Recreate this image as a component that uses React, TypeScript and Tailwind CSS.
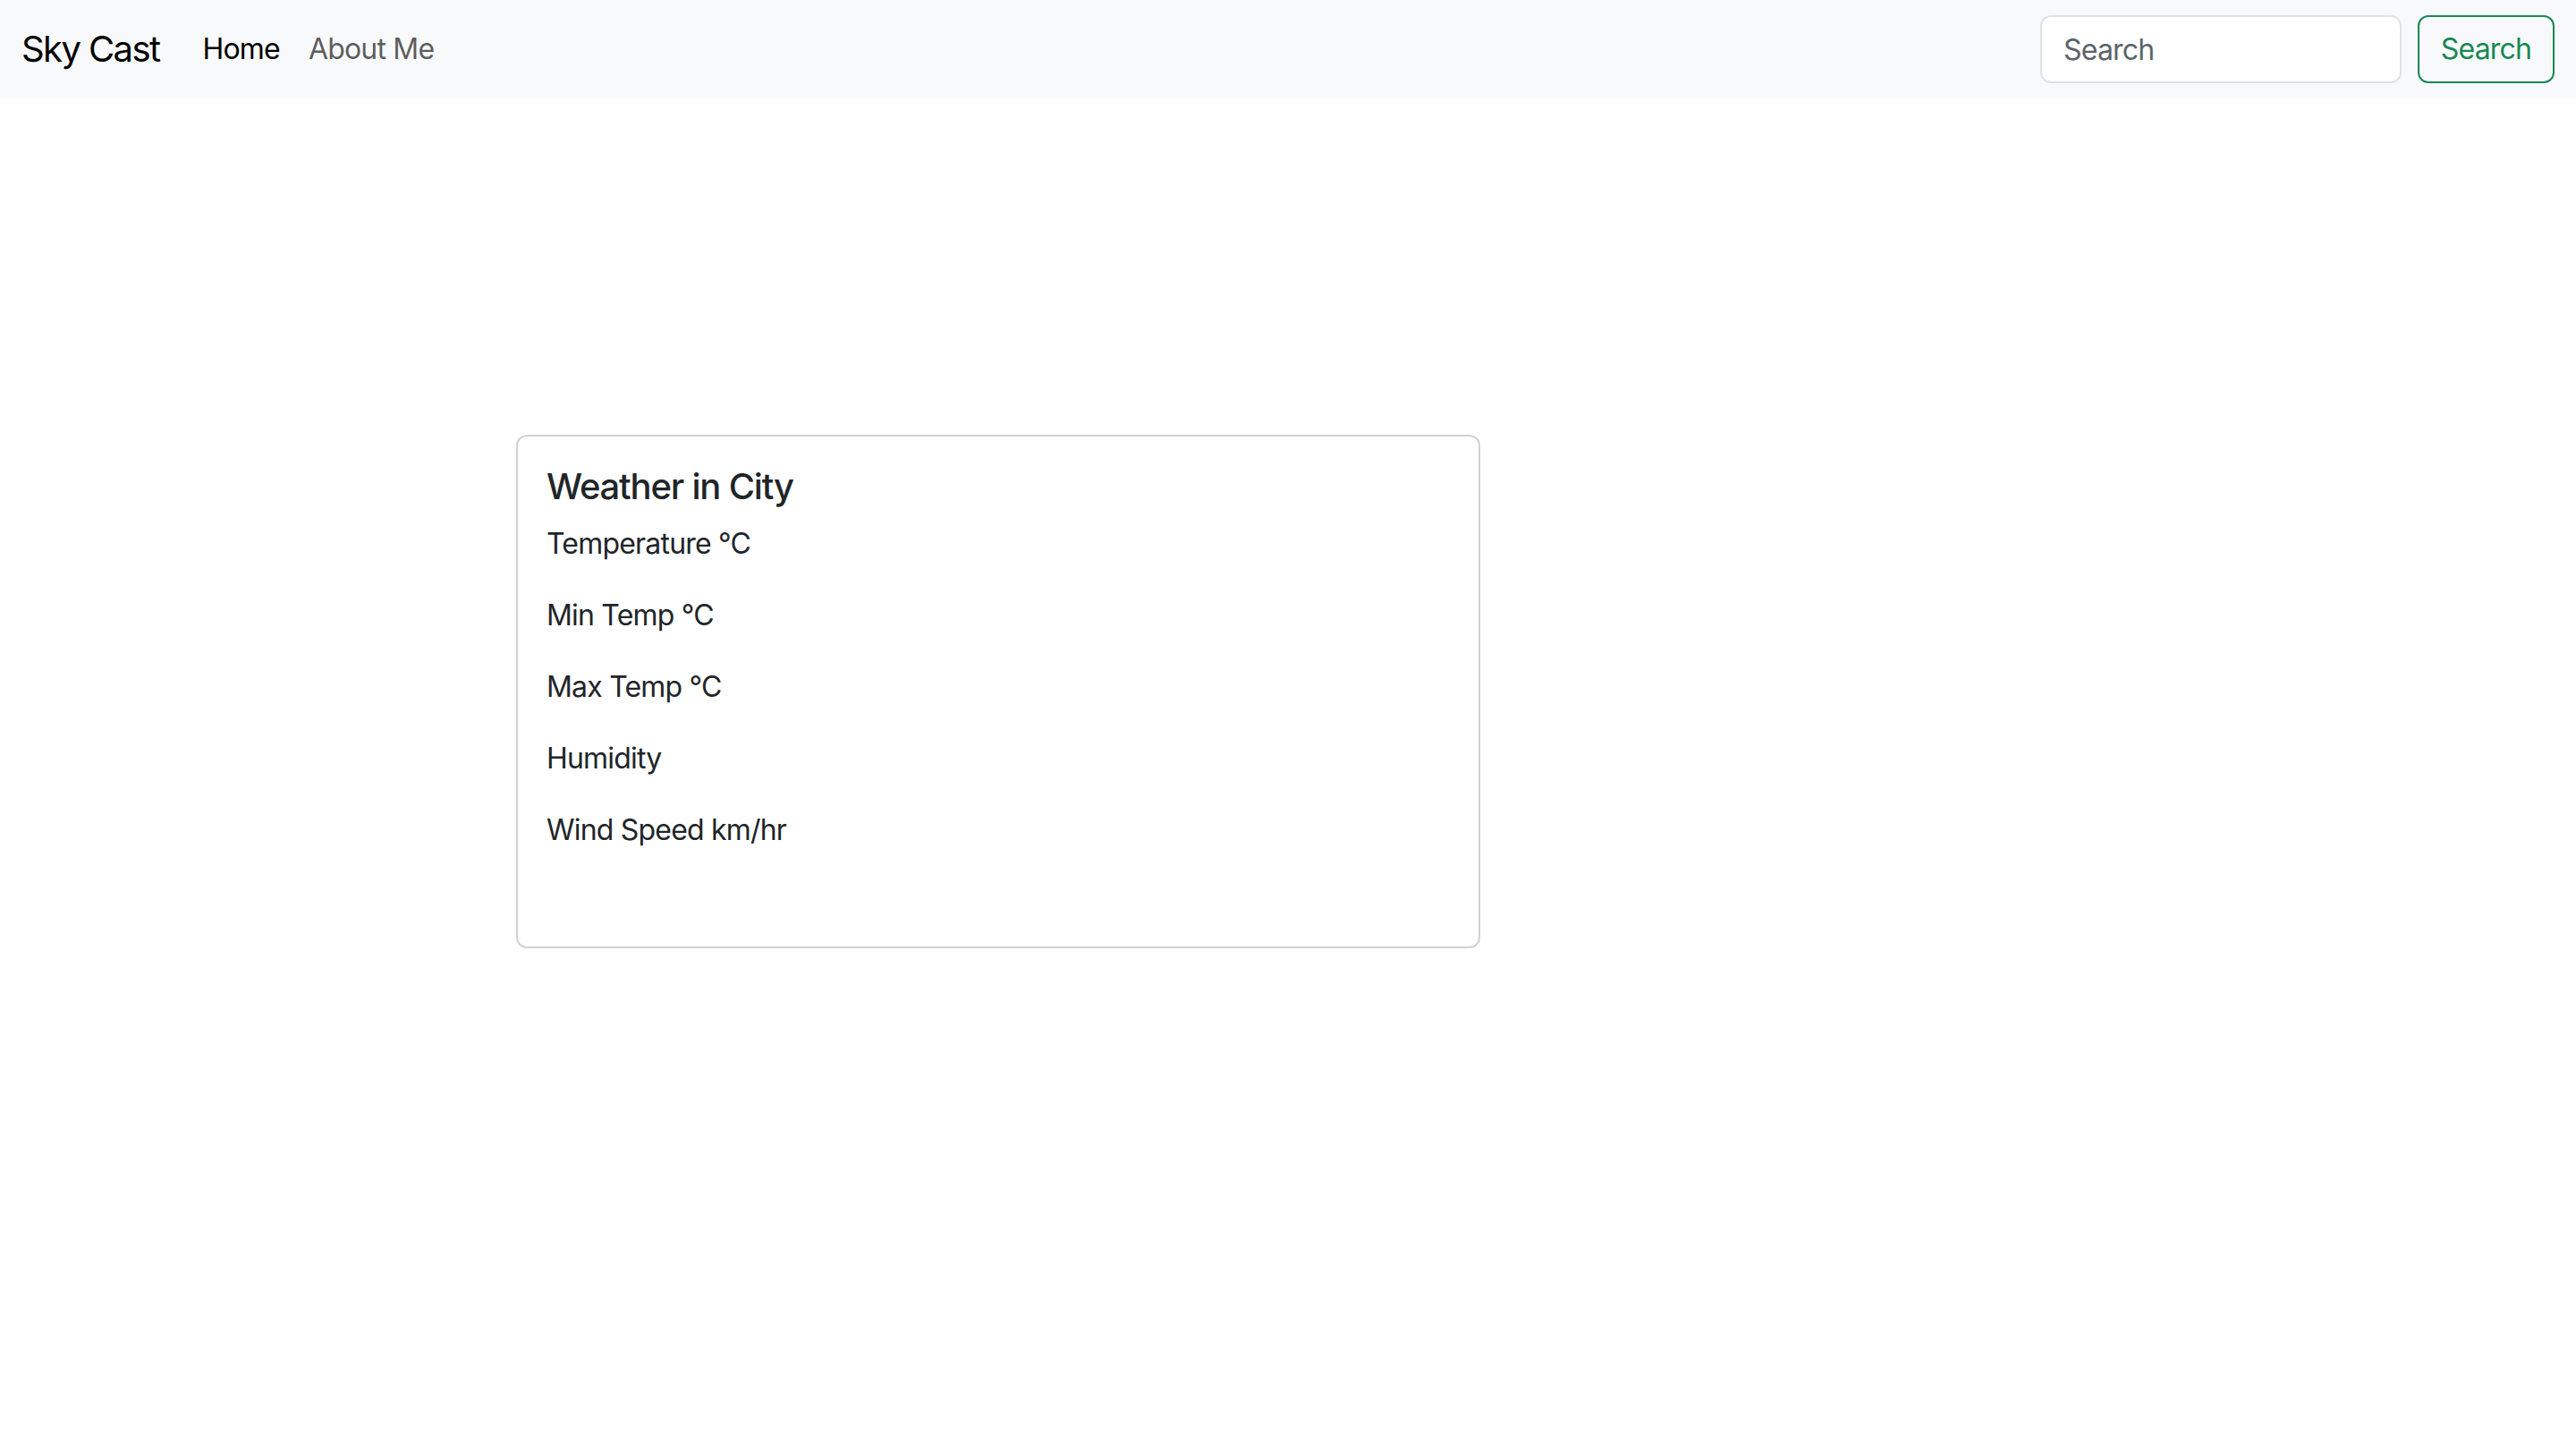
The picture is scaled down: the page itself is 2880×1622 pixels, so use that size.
import { useState } from "react";

const rows = ["Temperature °C", "Min Temp °C", "Max Temp °C", "Humidity", "Wind Speed km/hr"];

function Navbar() {
  const [query, setQuery] = useState("");
  return (
    <nav className="flex h-[110px] items-center justify-between bg-[#f8f9fa] px-[24px]">
      <div className="flex items-center">
        <a href="#" className="mr-[32px] text-[40px] leading-[60px] tracking-[-0.04em] text-black">
          Sky Cast
        </a>
        <ul className="flex items-center">
          <li>
            <a href="#" className="block px-[16px] py-[16px] text-[32px] leading-[48px] tracking-[-0.025em] text-black">
              Home
            </a>
          </li>
          <li>
            <a href="#" className="block px-[16px] py-[16px] text-[32px] leading-[48px] tracking-[-0.025em] text-black/65">
              About Me
            </a>
          </li>
        </ul>
      </div>
      <form className="flex items-center" onSubmit={(e) => e.preventDefault()}>
        <input
          value={query}
          onChange={(e) => setQuery(e.target.value)}
          placeholder="Search"
          className="mr-[18px] h-[76px] w-[404px] rounded-[12px] border-2 border-[#dee2e6] bg-white px-[24px] text-[32px] tracking-[-0.025em] text-[#212529] outline-none placeholder:text-[#5c636a]"
        />
        <button
          type="submit"
          className="h-[76px] w-[153px] rounded-[12px] border-2 border-[#198754] text-[32px] tracking-[-0.025em] text-[#198754]"
        >
          Search
        </button>
      </form>
    </nav>
  );
}

function WeatherCard() {
  return (
    <div className="ml-[577px] mt-[376px] h-[574px] w-[1078px] rounded-[12px] border-2 border-black/[0.175] bg-white p-[32px] text-[#212529]">
      <h5 className="mb-[16px] text-[40px] font-medium leading-[48px] tracking-[-0.03em]">Weather in City</h5>
      {rows.map((r) => (
        <p key={r} className="mb-[32px] text-[32px] leading-[48px] tracking-[-0.025em]">
          {r}
        </p>
      ))}
    </div>
  );
}

export default function App() {
  return (
    <div className="min-h-screen bg-white font-['Inter',sans-serif]">
      <Navbar />
      <WeatherCard />
    </div>
  );
}
